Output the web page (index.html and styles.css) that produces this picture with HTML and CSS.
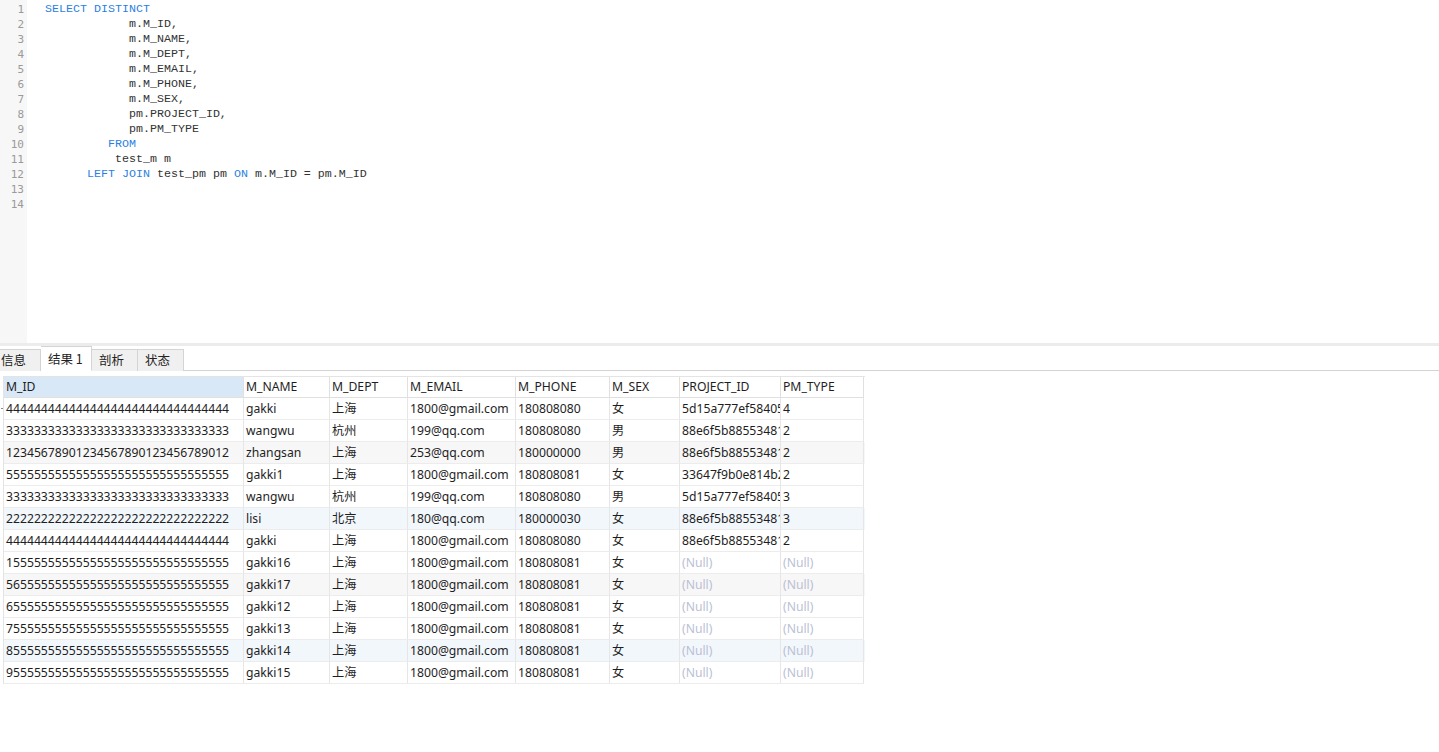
FILE: index.html
```html
<!DOCTYPE html>
<html lang="zh">
<head>
<meta charset="utf-8">
<title>Query</title>
<link rel="stylesheet" href="styles.css">
</head>
<body>
<div class="editor">
  <div class="gutter">
    <div>1</div><div>2</div><div>3</div><div>4</div><div>5</div><div>6</div><div>7</div>
    <div>8</div><div>9</div><div>10</div><div>11</div><div>12</div><div>13</div><div>14</div>
  </div>
  <pre class="code"><span class="kw">SELECT DISTINCT</span>
            m.M_ID,
            m.M_NAME,
            m.M_DEPT,
            m.M_EMAIL,
            m.M_PHONE,
            m.M_SEX,
            pm.PROJECT_ID,
            pm.PM_TYPE
         <span class="kw">FROM</span>
          test_m m
      <span class="kw">LEFT JOIN</span> test_pm pm <span class="kw">ON</span> m.M_ID = pm.M_ID

</pre>
</div>
<div class="splitter"></div>
<div class="tabs">
  <div class="tab first">信息</div>
  <div class="tab active">结果 1</div>
  <div class="tab">剖析</div>
  <div class="tab">状态</div>
</div>
<div class="grid">
  <div class="row head">
    <div class="c sel">M_ID</div><div class="c">M_NAME</div><div class="c">M_DEPT</div><div class="c">M_EMAIL</div><div class="c">M_PHONE</div><div class="c">M_SEX</div><div class="c">PROJECT_ID</div><div class="c">PM_TYPE</div>
  </div>
  <div class="row cur">
    <div class="c">44444444444444444444444444444444</div><div class="c">gakki</div><div class="c">上海</div><div class="c">1800@gmail.com</div><div class="c">180808080</div><div class="c">女</div><div class="c">5d15a777ef58405a</div><div class="c">4</div>
  </div>
  <div class="row">
    <div class="c">33333333333333333333333333333333</div><div class="c">wangwu</div><div class="c">杭州</div><div class="c">199@qq.com</div><div class="c">180808080</div><div class="c">男</div><div class="c">88e6f5b88553481a</div><div class="c">2</div>
  </div>
  <div class="row gray">
    <div class="c">12345678901234567890123456789012</div><div class="c">zhangsan</div><div class="c">上海</div><div class="c">253@qq.com</div><div class="c">180000000</div><div class="c">男</div><div class="c">88e6f5b88553481a</div><div class="c">2</div>
  </div>
  <div class="row">
    <div class="c">55555555555555555555555555555555</div><div class="c">gakki1</div><div class="c">上海</div><div class="c">1800@gmail.com</div><div class="c">180808081</div><div class="c">女</div><div class="c">33647f9b0e814b2a</div><div class="c">2</div>
  </div>
  <div class="row">
    <div class="c">33333333333333333333333333333333</div><div class="c">wangwu</div><div class="c">杭州</div><div class="c">199@qq.com</div><div class="c">180808080</div><div class="c">男</div><div class="c">5d15a777ef58405a</div><div class="c">3</div>
  </div>
  <div class="row blue">
    <div class="c">22222222222222222222222222222222</div><div class="c">lisi</div><div class="c">北京</div><div class="c">180@qq.com</div><div class="c">180000030</div><div class="c">女</div><div class="c">88e6f5b88553481a</div><div class="c">3</div>
  </div>
  <div class="row">
    <div class="c">44444444444444444444444444444444</div><div class="c">gakki</div><div class="c">上海</div><div class="c">1800@gmail.com</div><div class="c">180808080</div><div class="c">女</div><div class="c">88e6f5b88553481a</div><div class="c">2</div>
  </div>
  <div class="row">
    <div class="c">15555555555555555555555555555555</div><div class="c">gakki16</div><div class="c">上海</div><div class="c">1800@gmail.com</div><div class="c">180808081</div><div class="c">女</div><div class="c null">(Null)</div><div class="c null">(Null)</div>
  </div>
  <div class="row gray">
    <div class="c">56555555555555555555555555555555</div><div class="c">gakki17</div><div class="c">上海</div><div class="c">1800@gmail.com</div><div class="c">180808081</div><div class="c">女</div><div class="c null">(Null)</div><div class="c null">(Null)</div>
  </div>
  <div class="row">
    <div class="c">65555555555555555555555555555555</div><div class="c">gakki12</div><div class="c">上海</div><div class="c">1800@gmail.com</div><div class="c">180808081</div><div class="c">女</div><div class="c null">(Null)</div><div class="c null">(Null)</div>
  </div>
  <div class="row">
    <div class="c">75555555555555555555555555555555</div><div class="c">gakki13</div><div class="c">上海</div><div class="c">1800@gmail.com</div><div class="c">180808081</div><div class="c">女</div><div class="c null">(Null)</div><div class="c null">(Null)</div>
  </div>
  <div class="row blue">
    <div class="c">85555555555555555555555555555555</div><div class="c">gakki14</div><div class="c">上海</div><div class="c">1800@gmail.com</div><div class="c">180808081</div><div class="c">女</div><div class="c null">(Null)</div><div class="c null">(Null)</div>
  </div>
  <div class="row">
    <div class="c">95555555555555555555555555555555</div><div class="c">gakki15</div><div class="c">上海</div><div class="c">1800@gmail.com</div><div class="c">180808081</div><div class="c">女</div><div class="c null">(Null)</div><div class="c null">(Null)</div>
  </div>
</div>
</body>
</html>
```
FILE: styles.css
```css
html, body {
  margin: 0;
  padding: 0;
  background: #ffffff;
}
body {
  font-family: "Noto Sans", "Noto Sans CJK SC", sans-serif;
  font-size: 12px;
  color: #1e1e1e;
}
.editor {
  display: flex;
  height: 343px;
  background: #ffffff;
}
.gutter {
  width: 27px;
  box-sizing: border-box;
  background: #f7f7f7;
  padding: 2px 3px 0 0;
  text-align: right;
  font-family: "DejaVu Sans Mono", monospace;
  font-size: 11px;
  line-height: 15px;
  color: #9a9a9a;
}
.code {
  margin: 0;
  padding: 2px 0 0 18px;
  font-family: "Liberation Mono", monospace;
  font-size: 11.67px;
  line-height: 15px;
  color: #333333;
}
.kw {
  color: #2b7fe3;
}
.splitter {
  height: 3px;
  background: #ececec;
}
.tabs {
  display: flex;
  align-items: flex-end;
  height: 24px;
  border-bottom: 1px solid #d4d4d4;
}
.tab {
  box-sizing: border-box;
  width: 46px;
  height: 22px;
  margin-bottom: -1px;
  padding: 0 0 0 7px;
  background: #f0f0f0;
  border: 1px solid #d4d4d4;
  border-bottom: none;
  border-left: none;
  line-height: 20px;
  font-family: "Noto Sans CJK SC", sans-serif;
  font-size: 12.5px;
  color: #222;
}
.tab.first {
  width: 41px;
  padding-left: 1px;
}
.tab.active {
  width: 51px;
  height: 25px;
  background: #ffffff;
  line-height: 24px;
  padding-left: 7px;
  border-bottom: 1px solid #ffffff;
}
.grid {
  margin: 5px 0 0 3px;
  width: 861px;
  border-top: 1px solid #e4e4e4;
  border-left: 1px solid #e4e4e4;
  position: relative;
}
.row {
  display: grid;
  grid-template-columns: 240px 86px 78px 108px 94px 70px 101px 83px;
  height: 22px;
}
.row.head {
  height: 21px;
}
.row.gray {
  background: #f7f7f7;
}
.row.blue {
  background: #f2f7fc;
}
.c {
  box-sizing: border-box;
  border-right: 1px solid #e6e6e6;
  border-bottom: 1px solid #ececec;
  padding-left: 2px;
  line-height: 21px;
  white-space: nowrap;
  overflow: hidden;
  font-size: 12.2px;
}
.head .c {
  line-height: 20px;
  border-bottom-color: #e0e0e0;
  border-right-color: #e0e0e0;
}
.head .c.sel {
  background: #d9e8f6;
}
.null {
  color: #bbbfd4;
}
.row.cur::before {
  content: "";
  position: absolute;
  left: -3px;
  margin-top: 10px;
  width: 2px;
  height: 1px;
  background: #8a8a8a;
}
```
